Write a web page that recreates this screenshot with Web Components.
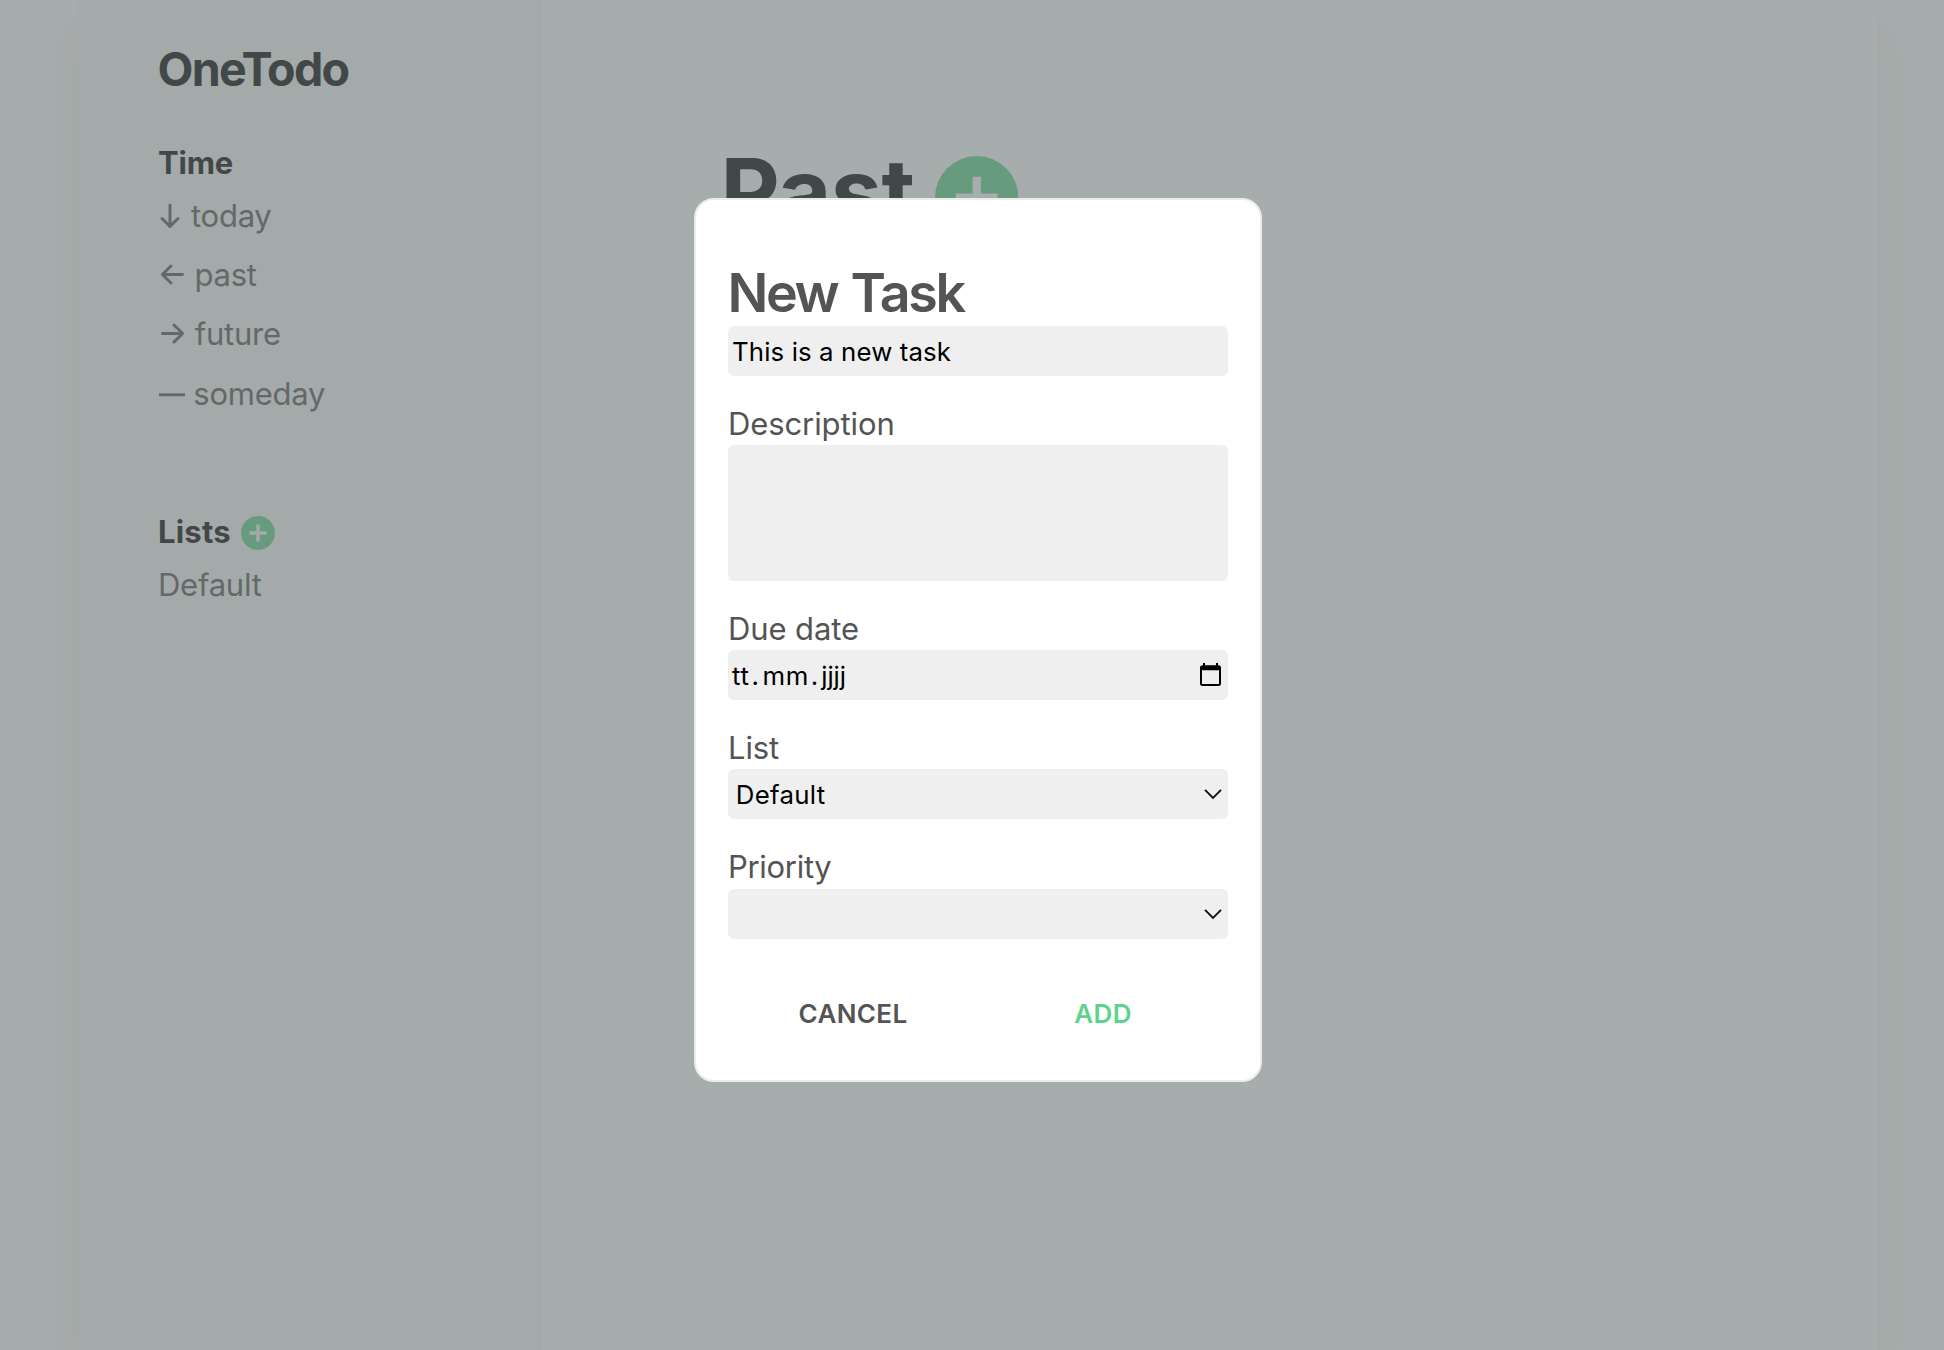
<!DOCTYPE html>
<html lang="en">
<head>
<meta charset="utf-8">
<title>OneTodo</title>
<style>
  html, body { margin: 0; height: 100%; overflow: hidden; background: #a7adac; }
  body { font-family: Inter, "Liberation Sans", sans-serif; color: #636968; }
</style>
</head>
<body>
<todo-app></todo-app>
<script>
const define = (name, html) => {
  const template = document.createElement('template');
  template.innerHTML = html;
  customElements.define(name, class extends HTMLElement {
    constructor() {
      super();
      this.attachShadow({ mode: 'open' }).append(template.content.cloneNode(true));
    }
  });
};

/* Round green "add" button, sized by --size */
define('add-button', `
  <style>
    :host { display: block; width: var(--size, 34px); height: var(--size, 34px); flex: none; }
    svg { display: block; width: 100%; height: 100%; }
  </style>
  <svg viewBox="0 0 34 34"><circle cx="17" cy="17" r="17" fill="#679b7e"/>
    <path d="M17 8.5v17M8.5 17h17" stroke="var(--plus, #a4aaa9)" stroke-width="3.4"/></svg>`);

/* One line of the sidebar navigation */
define('nav-item', `
  <style>
    :host { display: flex; align-items: center; height: 59.2px; font-size: 31px; line-height: 59.2px; letter-spacing: -.25px; white-space: nowrap; }
    ::slotted(svg) { flex: none; fill: none; stroke: #636968; stroke-width: 2.9; stroke-linecap: round; stroke-linejoin: round; }
  </style>
  <slot name="icon"></slot><slot></slot>`);

define('nav-heading', `
  <style>
    :host { display: flex; align-items: center; height: 40px; font-size: 31px; line-height: 40px; font-weight: 700; color: #424847; }
  </style>
  <slot></slot>`);

define('side-bar', `
  <style>
    :host { display: block; box-sizing: border-box; width: 463px; flex: none; padding: 39px 0 0 80px; background: #a4aaa9; }
    h1 { margin: 0 0 44px -.4px; font-size: 46.6px; line-height: 60px; font-weight: 700; letter-spacing: -1.75px; color: #424847; }
    nav { padding-top: 3px; }
    .lists { padding-top: 2.7px; }
    .second { margin-top: 89.5px; }
    svg { display: block; }
    add-button { margin-left: 10.5px; margin-top: 1px; }
  </style>
  <h1>OneTodo</h1>
  <nav-heading style="letter-spacing:-.2px">Time</nav-heading>
  <nav>
    <nav-item><svg slot="icon" width="33" height="30" viewBox="0 0 33 30"><path d="M12 4.2V25.2M4 17.5l8 8 8-8"/></svg>today</nav-item>
    <nav-item><svg slot="icon" width="36.5" height="30" viewBox="0 0 36.5 30"><path d="M4.5 14.5H24.5M13 6l-8.6 8.5L13 23"/></svg>past</nav-item>
    <nav-item><svg slot="icon" width="36.8" height="30" viewBox="0 0 36.8 30"><path d="M4.5 14.5H24.5M16 6l8.6 8.5-8.6 8.5"/></svg>future</nav-item>
    <nav-item><svg slot="icon" width="35.3" height="30" viewBox="0 0 35.3 30"><path d="M1 16.8H27" style="stroke-linecap:butt"/></svg>someday</nav-item>
  </nav>
  <nav-heading class="second" style="letter-spacing:.2px">Lists<add-button></add-button></nav-heading>
  <nav class="lists"><nav-item>Default</nav-item></nav>`);

define('list-page', `
  <style>
    :host { display: block; flex: 1; padding: 137px 0 0 179.5px; }
    header { display: flex; align-items: flex-start; }
    h2 { margin: 0; font-size: 91.5px; line-height: 110px; font-weight: 700; letter-spacing: -.5px; color: #424847; }
    add-button { --size: 83.4px; --plus: #a7adac; margin: 19px 0 0 20px; }
  </style>
  <header><h2>Past</h2><add-button></add-button></header>`);

/* Labelled form field; the control is slotted in */
define('form-field', `
  <style>
    :host { display: flex; flex-direction: column; margin-top: 29px; }
    label { font-size: 31px; line-height: 38px; margin-bottom: var(--gap, 2px); letter-spacing: -.1px; color: #545454; }
  </style>
  <label><slot name="label"></slot></label><slot></slot>`);

define('field-box', `
  <style>
    :host { display: flex; align-items: center; justify-content: space-between; box-sizing: border-box; height: var(--height, 50px);
      padding: 0 6px 0 var(--inset, 4px); border-radius: 6px; background: #efefef; color: #000; font-size: 25.8px; line-height: 48px; }
    .value { display: flex; padding-top: 2px; }
    ::slotted(svg) { display: block; flex: none; }
  </style>
  <div class="value"><slot></slot></div><slot name="icon"></slot>`);

define('text-button', `
  <style>
    :host { display: block; text-align: center; font-size: 26px; line-height: 40px; font-weight: 600; letter-spacing: .35px; color: var(--tone, #545454); }
  </style>
  <slot></slot>`);

define('task-dialog', `
  <style>
    :host { display: flex; flex-direction: column; box-sizing: border-box; width: 568px; height: 884px; padding: 61px 32px 0; border: 2px solid #ececec; border-radius: 20px; background: #fff; }
    h3 { margin: 0 0 1px -.6px; font-size: 53.8px; line-height: 64px; font-weight: 600; letter-spacing: -2.35px; word-spacing: 2px; color: #545454; }
    .date { display: flex; }
    .actions { display: grid; grid-template-columns: 1fr 1fr; margin-top: 55px; }
  </style>
  <h3>New Task</h3>
  <field-box style="letter-spacing:.12px">This is a new task</field-box>
  <form-field><span slot="label">Description</span><field-box style="--height:136px"></field-box></form-field>
  <form-field><span slot="label">Due date</span>
    <field-box><span class="date"><span style="letter-spacing:.8px">tt</span><span style="margin:0 3.6px 0 1.7px">.</span><span style="letter-spacing:.6px">mm</span><span style="margin:0 3.2px 0 1.7px">.</span><span style="letter-spacing:-.1px">jjjj</span></span>
      <svg slot="icon" width="23" height="24" viewBox="0 0 23 24"><path fill-rule="evenodd" d="M4 0h2v2.2h11V0h2v2.2h.5A2.5 2.5 0 0 1 22 4.7V20.5A2.5 2.5 0 0 1 19.5 23H3.5A2.5 2.5 0 0 1 1 20.5V4.7A2.5 2.5 0 0 1 3.5 2.200H4zM3 7.2V21H20V7.2z"/></svg>
    </field-box></form-field>
  <form-field><span slot="label">List</span>
    <field-box style="--inset:7.8px;letter-spacing:.3px">Default<svg slot="icon" width="18" height="12" viewBox="0 0 18 12"><path d="M1 1.8l8 8.2 8-8.2" fill="none" stroke="#111" stroke-width="1.9"/></svg></field-box></form-field>
  <form-field style="--gap:3px"><span slot="label" style="letter-spacing:-.3px">Priority</span>
    <field-box><svg slot="icon" width="18" height="12" viewBox="0 0 18 12"><path d="M1 1.8l8 8.2 8-8.2" fill="none" stroke="#111" stroke-width="1.9"/></svg></field-box></form-field>
  <div class="actions"><text-button>CANCEL</text-button><text-button style="--tone:#5fd38d">ADD</text-button></div>`);

define('todo-app', `
  <style>
    :host { display: block; height: 1350px; position: relative; }
    .app { display: flex; width: 1800px; height: 1350px; margin-left: 78px; box-shadow: 0 25px 50px rgba(0, 10, 8, .045); background: #a7adac; }
    .layer { position: absolute; inset: 0; display: flex; justify-content: center; align-items: flex-start; padding: 198px 0 0 12px; }
  </style>
  <div class="app"><side-bar></side-bar><list-page></list-page></div>
  <div class="layer"><task-dialog></task-dialog></div>`);
</script>
</body>
</html>
